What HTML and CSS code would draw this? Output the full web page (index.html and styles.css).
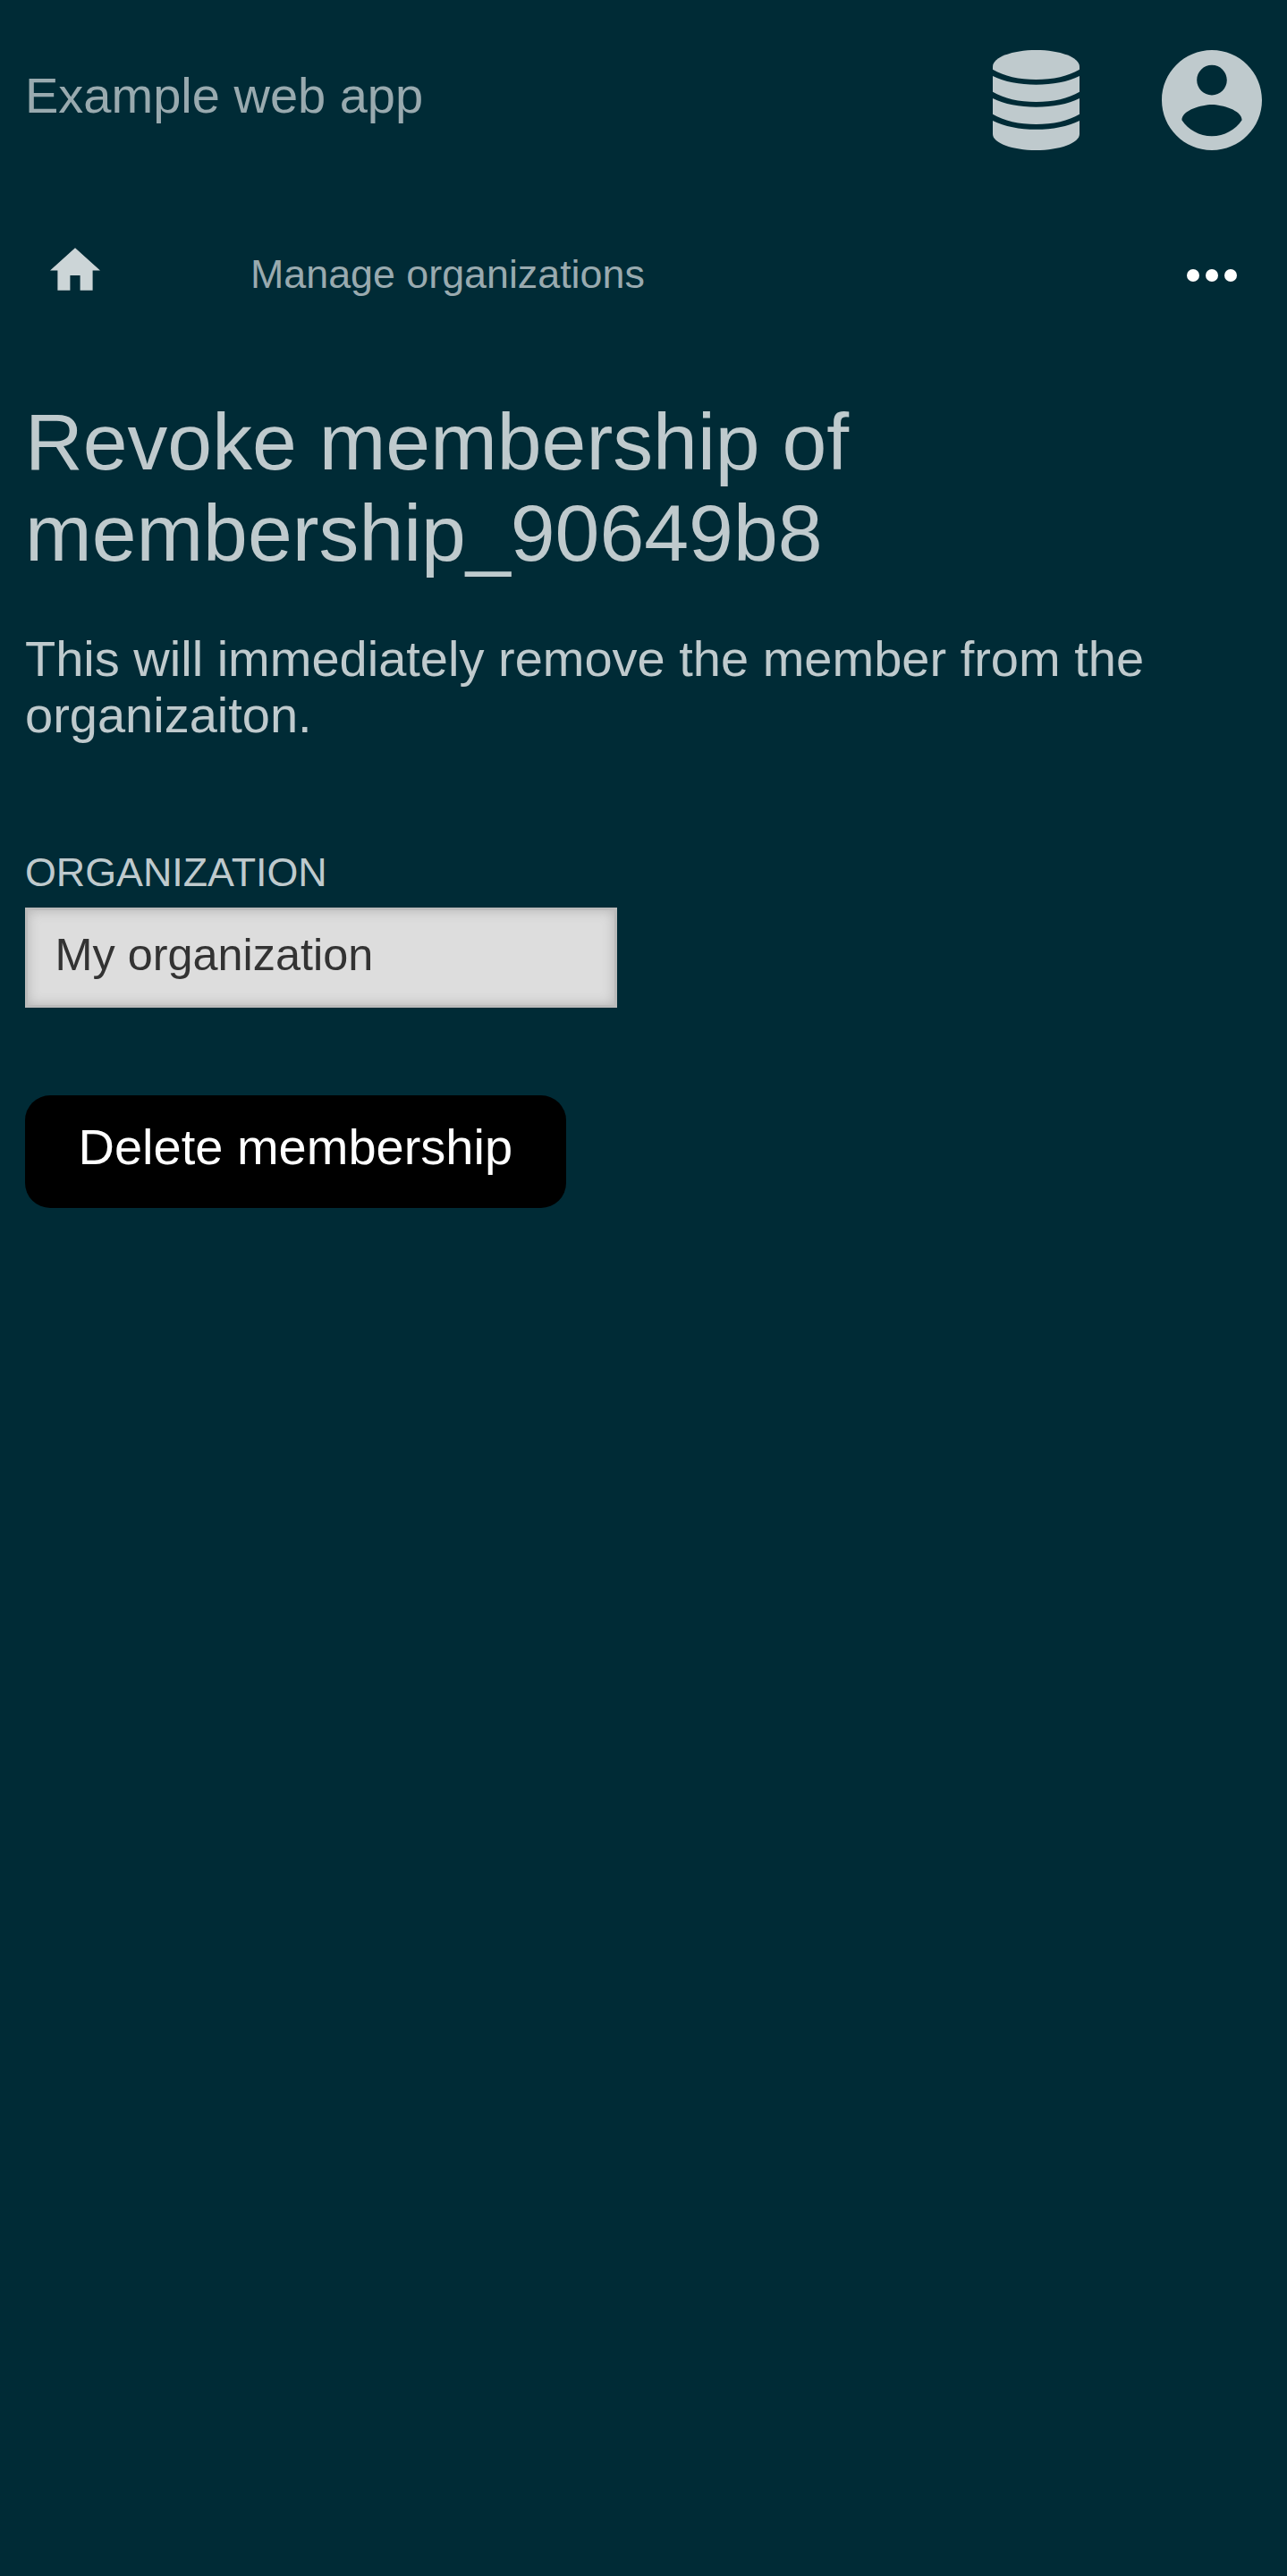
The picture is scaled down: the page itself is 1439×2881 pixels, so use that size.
FILE: index.html
```html
<!DOCTYPE html>
<html lang="en">
<head>
<meta charset="utf-8">
<title>Revoke membership</title>
<link rel="stylesheet" href="styles.css">
</head>
<body>
<header class="header">
  <a class="app-name">Example web app</a>
  <div class="header-icons">
    <svg class="icon-database" viewBox="0 0 97 112">
      <path d="M0 18.5C0 8 22 0 48.5 0S97 8 97 18.5V21.7C85 29 67 33 48.5 33S12 29 0 21.7Z"/>
      <path d="M0 29C13 35.5 30 38.7 48.5 38.7S84 35.5 97 29V46.7C85 54 67 58 48.5 58S12 54 0 46.7Z"/>
      <path d="M0 54C13 60.5 30 63.7 48.5 63.7S84 60.5 97 54V71.7C85 79 67 83 48.5 83S12 79 0 71.7Z"/>
      <path d="M0 79C13 85.5 30 88.8 48.5 88.8S84 85.5 97 79V94C97 104 75 112 48.5 112S0 104 0 94Z"/>
    </svg>
    <svg class="icon-account" viewBox="2 2 20 20"><path d="M12 2C6.48 2 2 6.48 2 12s4.48 10 10 10 10-4.48 10-10S17.52 2 12 2zm0 3c1.66 0 3 1.34 3 3s-1.34 3-3 3-3-1.34-3-3 1.34-3 3-3zm0 14.2c-2.5 0-4.71-1.28-6-3.22.03-1.99 4-3.08 6-3.08 1.99 0 5.97 1.09 6 3.08-1.29 1.94-3.5 3.22-6 3.22z"/></svg>
  </div>
</header>
<nav class="nav">
  <svg class="icon-home" viewBox="2 3 20 17"><path d="M10 20v-6h4v6h5v-8h3L12 3 2 12h3v8z"/></svg>
  <a class="nav-link">Manage organizations</a>
  <svg class="icon-more" viewBox="4 10 16 4"><circle cx="6" cy="12" r="2"/><circle cx="12" cy="12" r="2"/><circle cx="18" cy="12" r="2"/></svg>
</nav>
<main class="main">
  <h1 class="heading">Revoke membership of membership_90649b8</h1>
  <p class="intro">This will immediately remove the member from the organizaiton.</p>
  <form class="form">
    <label class="label" for="organization">Organization</label>
    <input class="input" id="organization" type="text" value="My organization" readonly>
    <button class="button" type="button">Delete membership</button>
  </form>
</main>
</body>
</html>
```
FILE: styles.css
```css
* {
  box-sizing: border-box;
}

body {
  margin: 0;
  min-height: 2881px;
  background: #002b36;
  color: #bfcacd;
  font-family: "Liberation Sans", Arial, sans-serif;
  font-size: 56px;
  line-height: 63px;
}

svg {
  display: block;
  fill: currentColor;
}

.header {
  display: flex;
  justify-content: space-between;
  align-items: flex-start;
  height: 224px;
  padding: 56px 28px 0;
}

.app-name {
  padding-top: 19px;
  color: #99aaaf;
}

.header-icons {
  display: flex;
  gap: 92px;
}

.icon-database {
  width: 97px;
  height: 112px;
}

.icon-account {
  width: 112px;
  height: 112px;
}

.nav {
  display: flex;
  align-items: flex-start;
  height: 168px;
  padding: 53px 56px 0;
}

.icon-home {
  width: 56px;
  height: 48px;
  color: #ccd5d7;
}

.nav-link {
  margin-left: 168px;
  padding-top: 3px;
  color: #99aaaf;
  font-size: 44.8px;
  line-height: 52px;
}

.icon-more {
  width: 56px;
  height: 14px;
  margin: 24px 0 0 auto;
  color: #fff;
}

.main {
  padding: 51px 28px 0;
}

.heading {
  width: 1100px;
  margin: 0 0 58px;
  font-size: 89.6px;
  font-weight: 400;
  line-height: 102px;
}

.intro {
  margin: 0 0 118px;
}

.form {
  display: flex;
  flex-direction: column;
  align-items: flex-start;
}

.label {
  margin-bottom: 14px;
  font-size: 44.8px;
  line-height: 52px;
  text-transform: uppercase;
}

.input {
  width: 662px;
  height: 112px;
  margin: 0 0 98px;
  padding: 0 30.5px 7px;
  border: 3px solid #bbb;
  border-radius: 0;
  outline: 0;
  background: #ddd;
  box-shadow: inset 0 0 14px #b4b4b4;
  color: #333;
  font: 50.4px "Liberation Sans", Arial, sans-serif;
}

.button {
  height: 126px;
  padding: 0 59.5px 12px;
  border: 0;
  border-radius: 28px;
  background: #000;
  color: #fff;
  font: 56px/63px "Liberation Sans", Arial, sans-serif;
}
```
